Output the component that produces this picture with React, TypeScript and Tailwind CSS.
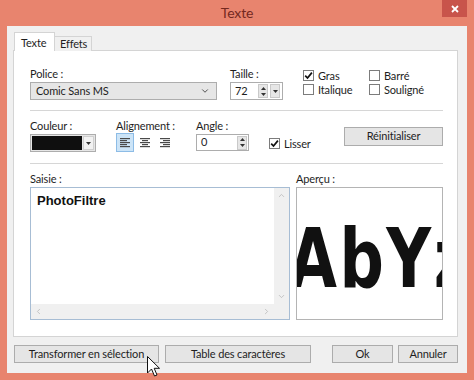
import { ChevronDown, ChevronLeft, ChevronRight, ChevronUp } from "lucide-react";

const ui = "font-['Lato','Liberation_Sans',sans-serif] tracking-[-0.15px]";

function Check({ checked }: { checked?: boolean }) {
  return (
    <span className="w-[11px] h-[11px] border border-[#7c7c7c] bg-white flex items-center justify-center shrink-0">
      {checked ? (
        <svg width="9" height="9" viewBox="0 0 9 9">
          <path d="M1.2 4.6 L3.5 7 L7.9 1.6" stroke="#111" strokeWidth="1.7" fill="none" />
        </svg>
      ) : null}
    </span>
  );
}

function CheckRow({ label, checked }: { label: string; checked?: boolean }) {
  return (
    <div className="flex items-center gap-[4px] h-[11px] leading-[11px] text-[#1e1e1e] whitespace-nowrap">
      <Check checked={checked} />
      <span>{label}</span>
    </div>
  );
}

function Tri({ up }: { up?: boolean }) {
  return (
    <svg width="5" height="3" viewBox="0 0 5 3">
      <path d={up ? "M0 3 L2.5 0 L5 3 Z" : "M0 0 L5 0 L2.5 3 Z"} fill="#333" />
    </svg>
  );
}

function Spin() {
  return (
    <div className="w-[10px] h-[14px] bg-[#e6e6e6] border border-[#c9c9c9] flex flex-col items-center justify-around">
      <Tri up />
      <Tri />
    </div>
  );
}

function AlignIcon({ kind }: { kind: "left" | "center" | "right" }) {
  const short = kind === "left" ? [0, 7] : kind === "center" ? [2, 8] : [3, 10];
  const rows = [[0, 10], short, [0, 10], short, [0, 10]];
  return (
    <svg width="11" height="10" viewBox="0 0 11 10">
      {rows.map((r, i) => (
        <rect key={i} x={r[0]} y={i * 2} width={r[1] - r[0]} height="1.2" fill="#4a4a4a" />
      ))}
    </svg>
  );
}

function Btn({ label, w }: { label: string; w: string }) {
  return (
    <div
      className={`${w} h-[18px] bg-[#e5e5e5] border border-[#acacac] flex items-center justify-center text-[#1e1e1e] whitespace-nowrap`}
    >
      {label}
    </div>
  );
}

export default function App() {
  return (
    <div className={`w-[474px] h-[380px] bg-[#e8846e] relative overflow-hidden text-[11px] ${ui}`}>
      {/* title bar */}
      <div className="h-[26px] flex items-center justify-center text-[14px] text-[#74291f] pb-[1px]">
        Texte
      </div>
      <div className="absolute top-0 left-[442px] w-[25px] h-[17px] bg-[#c8544b] flex items-center justify-center">
        <svg width="8" height="8" viewBox="0 0 8 8">
          <path d="M1 1 L7 7 M7 1 L1 7" stroke="#fff" strokeWidth="1.8" />
        </svg>
      </div>

      {/* dialog body */}
      <div className="mx-[7px] h-[347px] bg-[#f0f0f0] px-[6px] pt-[6px]">
        {/* tabs */}
        <div className="flex items-end h-[19px] pl-[1px]">
          <div className="relative z-10 h-[19px] w-[41px] bg-white border border-b-0 border-[#d4d4d4] text-[#1e1e1e] pl-[6px] pt-[2px]">
            Texte
          </div>
          <div className="h-[15px] w-[37px] bg-[#f0f0f0] border border-l-0 border-b-0 border-[#d4d4d4] text-[#1e1e1e] pl-[5px] leading-[14px]">
            Effets
          </div>
        </div>

        {/* panel */}
        <div className="-mt-px h-[287px] w-[445px] bg-white border border-[#d4d4d4] pl-[16px] pr-[14px] pt-[16px] text-[#1e1e1e]">
          {/* row 1 */}
          <div className="flex">
            <div className="w-[187px]">
              <div className="h-[15px] leading-[13px]">Police :</div>
              <div className="h-[18px] bg-[#e6e6e6] border border-[#adadad] flex items-center justify-between pl-[5px] pr-[6px]">
                <span>Comic Sans MS</span>
                <ChevronDown size={10} strokeWidth={2.2} color="#444" />
              </div>
            </div>
            <div className="ml-[13px] w-[53px]">
              <div className="h-[15px] leading-[13px]">Taille :</div>
              <div className="h-[18px] bg-white border border-[#adadad] flex items-center pl-[4px] pr-[2px] gap-[2px]">
                <span className="flex-1">72</span>
                <Spin />
                <div className="w-[10px] h-[14px] bg-[#e6e6e6] border border-[#c9c9c9] flex items-center justify-center">
                  <Tri />
                </div>
              </div>
            </div>
            <div className="ml-[20px] pt-[3px] flex flex-col gap-[3px] w-[66px]">
              <CheckRow label="Gras" checked />
              <CheckRow label="Italique" />
            </div>
            <div className="pt-[3px] flex flex-col gap-[3px]">
              <CheckRow label="Barré" />
              <CheckRow label="Souligné" />
            </div>
          </div>

          <div className="mt-[10px] h-px bg-[#d6d6d6]" />

          {/* row 2 */}
          <div className="mt-[9px] flex">
            <div className="w-[66px]">
              <div className="h-[14px] leading-[12px]">Couleur :</div>
              <div className="h-[18px] bg-[#e6e6e6] border border-[#adadad] flex items-center pl-[1px] pr-[1px]">
                <div className="w-[50px] h-[14px] bg-[#0f0f0f]" />
                <div className="ml-auto w-[11px] h-[14px] bg-[#f2f2f2] border border-[#d0d0d0] flex items-center justify-center">
                  <Tri />
                </div>
              </div>
            </div>
            <div className="ml-[20px] w-[60px]">
              <div className="h-[13px] leading-[12px] whitespace-nowrap">Alignement :</div>
              <div className="flex gap-[2px]">
                <div className="w-[18px] h-[19px] bg-[#cce4f7] border border-[#8dbce6] flex items-center justify-center">
                  <AlignIcon kind="left" />
                </div>
                <div className="w-[18px] h-[19px] flex items-center justify-center">
                  <AlignIcon kind="center" />
                </div>
                <div className="w-[18px] h-[19px] flex items-center justify-center">
                  <AlignIcon kind="right" />
                </div>
              </div>
            </div>
            <div className="ml-[20px] w-[53px]">
              <div className="h-[14px] leading-[12px]">Angle :</div>
              <div className="h-[17px] bg-white border border-[#adadad] flex items-center pl-[4px] pr-[1px]">
                <span className="flex-1">0</span>
                <Spin />
              </div>
            </div>
            <div className="ml-[20px] pt-[18px]">
              <CheckRow label="Lisser" checked />
            </div>
            <div className="ml-auto mt-[7px] w-[99px] h-[19px] bg-[#e5e5e5] border border-[#acacac] flex items-center justify-center">
              Réinitialiser
            </div>
          </div>

          <div className="mt-[11px] h-px bg-[#d6d6d6]" />

          {/* row 3 */}
          <div className="mt-[9px] flex">
            <div className="w-[260px]">
              <div className="h-[14px] leading-[12px]">Saisie :</div>
              <div className="h-[133px] border border-[#a7bdd4] bg-white flex flex-col">
                <div className="flex-1 flex">
                  <div className="flex-1 pl-[6px] pt-[3px] text-[13px] font-bold tracking-normal text-[#111] font-['Liberation_Sans',sans-serif]">
                    PhotoFiltre
                  </div>
                  <div className="w-[15px] bg-[#f0f0f0] flex flex-col items-center justify-between py-[3px]">
                    <ChevronUp size={9} color="#b5b5b5" strokeWidth={2} />
                    <ChevronDown size={9} color="#b5b5b5" strokeWidth={2} />
                  </div>
                </div>
                <div className="h-[15px] bg-[#f0f0f0] flex items-center justify-between pl-[3px] pr-[18px]">
                  <ChevronLeft size={9} color="#b5b5b5" strokeWidth={2} />
                  <ChevronRight size={9} color="#b5b5b5" strokeWidth={2} />
                </div>
              </div>
            </div>
            <div className="ml-[6px] w-[147px]">
              <div className="h-[14px] leading-[12px]">Aperçu :</div>
              <div className="h-[133px] border border-[#b4b4b4] bg-white relative overflow-hidden">
                <div className="absolute left-[-8px] top-[29px] h-[84px] leading-[84px] text-[82px] font-bold text-[#111] whitespace-nowrap tracking-[3px] origin-left scale-x-[0.84] font-['DejaVu_Sans_Condensed','DejaVu_Sans',sans-serif]">
                  AbYz
                </div>
              </div>
            </div>
          </div>
        </div>

        {/* buttons */}
        <div className="mt-[8px] flex pl-[1px]">
          <Btn label="Transformer en sélection" w="w-[145px]" />
          <div className="ml-[6px]">
            <Btn label="Table des caractères" w="w-[146px]" />
          </div>
          <div className="ml-[21px]">
            <Btn label="Ok" w="w-[61px]" />
          </div>
          <div className="ml-[5px]">
            <Btn label="Annuler" w="w-[60px]" />
          </div>
        </div>
      </div>

      {/* mouse cursor */}
      <svg className="absolute left-[147px] top-[356px]" width="14" height="22" viewBox="0 0 14 22">
        <path
          d="M0.5 0.5 L0.5 17 L4.5 13 L7.5 20 L10 19 L7.2 12.3 L12.5 12.3 Z"
          fill="#fff"
          stroke="#111"
          strokeWidth="1"
          strokeLinejoin="round"
        />
      </svg>
    </div>
  );
}
